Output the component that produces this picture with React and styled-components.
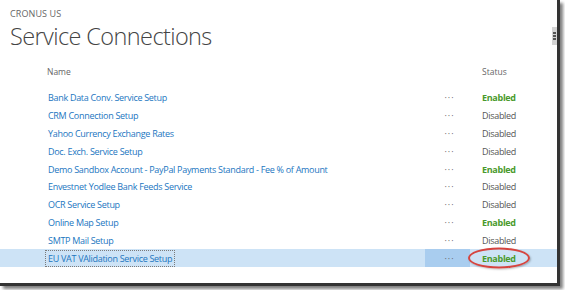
import React from "react";
import styled, { createGlobalStyle } from "styled-components";

const GlobalStyle = createGlobalStyle`
  html, body {
    margin: 0;
    padding: 0;
    background: #fff;
    overflow: hidden;
  }
  body {
    font-family: "Open Sans", "Noto Sans", sans-serif;
  }
`;

const rows = [
  { name: "Bank Data Conv. Service Setup", enabled: true },
  { name: "CRM Connection Setup", enabled: false },
  { name: "Yahoo Currency Exchange Rates", enabled: false },
  { name: "Doc. Exch. Service Setup", enabled: false },
  { name: "Demo Sandbox Account - PayPal Payments Standard - Fee % of Amount", enabled: true },
  { name: "Envestnet Yodlee Bank Feeds Service", enabled: false },
  { name: "OCR Service Setup", enabled: false },
  { name: "Online Map Setup", enabled: true },
  { name: "SMTP Mail Setup", enabled: false },
  { name: "EU VAT VAlidation Service Setup", enabled: true, selected: true },
];

const Frame = styled.div`
  width: 565px;
  height: 290px;
  background: #fff;
`;

const Page = styled.div`
  position: relative;
  width: 560px;
  height: 286px;
  background: #fff;
  border-right: 3px solid #333;
  border-bottom: 3px solid #333;
  box-shadow: 3px 3px 3px rgba(0, 0, 0, 0.5);
  box-sizing: border-box;
  display: flex;
  flex-direction: column;
`;

const Header = styled.header`
  padding: 8px 0 0 10px;
  display: flex;
  flex-direction: column;
`;

const Company = styled.div`
  font-size: 9px;
  color: #666;
  letter-spacing: 0.1px;
  line-height: 12px;
`;

const Title = styled.h1`
  margin: 0;
  font-weight: 300;
  font-size: 23.5px;
  line-height: 32px;
  letter-spacing: -0.6px;
  color: #444;
`;

const ScrollGrip = styled.div`
  position: absolute;
  right: 0;
  top: 27px;
  width: 5px;
  height: 18px;
  background: #d4d4d4;
  display: flex;
  flex-direction: column;
  align-items: center;
  justify-content: center;
  gap: 1px;

  span {
    width: 3px;
    height: 2px;
    background: #555;
  }
`;

const Table = styled.div`
  margin-top: 9px;
  display: flex;
  flex-direction: column;
`;

const Row = styled.div`
  display: grid;
  grid-template-columns: 378px 45px 1fr;
  align-items: center;
  padding-left: 47px;
  height: ${(p) => (p.$head ? "20px" : "17.8px")};
  margin-bottom: ${(p) => (p.$head ? "8px" : "0")};
  background: ${(p) => (p.$selected ? "#cde3f6" : "transparent")};
  font-size: 9px;
  letter-spacing: -0.3px;
`;

const HeadCell = styled.div`
  color: #666;
  font-size: 8.5px;
  letter-spacing: 0;
  padding-left: ${(p) => p.$indent || 0}px;
`;

const NameCell = styled.div`
  color: #2276bf;
  white-space: nowrap;
  display: flex;
  align-items: center;
  height: 100%;
`;

const NameText = styled.span`
  padding: 1px 2px;
  margin-left: -2px;
  border: 1px dotted ${(p) => (p.$focus ? "#7a7a7a" : "transparent")};
`;

const DotsCell = styled.div`
  height: 100%;
  display: flex;
  align-items: center;
  justify-content: center;
  color: #666;
  letter-spacing: 1px;
  font-size: 9px;
  padding-left: 4px;
  background: ${(p) => (p.$selected ? "#a9cdef" : "transparent")};
`;

const StatusCell = styled.div`
  position: relative;
  height: 100%;
  display: flex;
  align-items: center;
  padding-left: 12px;
  font-weight: ${(p) => (p.$enabled ? 700 : 400)};
  color: ${(p) => (p.$enabled ? "#4a9a2c" : "#555")};
`;

const Highlight = styled.span`
  position: absolute;
  left: -2px;
  top: 50%;
  transform: translateY(-50%);
  width: 58px;
  height: 17px;
  border: 2px solid #d6443f;
  border-radius: 50%;
  box-shadow: 1px 1px 2px rgba(0, 0, 0, 0.25);
`;

export default function App() {
  return (
    <Frame>
      <GlobalStyle />
      <Page>
        <Header>
          <Company>CRONUS US</Company>
          <Title>Service Connections</Title>
        </Header>
        <ScrollGrip>
          <span />
          <span />
          <span />
        </ScrollGrip>
        <Table>
          <Row $head>
            <HeadCell>Name</HeadCell>
            <div />
            <HeadCell $indent={12}>Status</HeadCell>
          </Row>
          {rows.map((r) => (
            <Row key={r.name} $selected={r.selected}>
              <NameCell>
                <NameText $focus={r.selected}>{r.name}</NameText>
              </NameCell>
              <DotsCell $selected={r.selected}>···</DotsCell>
              <StatusCell $enabled={r.enabled}>
                {r.enabled ? "Enabled" : "Disabled"}
                {r.selected && <Highlight />}
              </StatusCell>
            </Row>
          ))}
        </Table>
      </Page>
    </Frame>
  );
}
